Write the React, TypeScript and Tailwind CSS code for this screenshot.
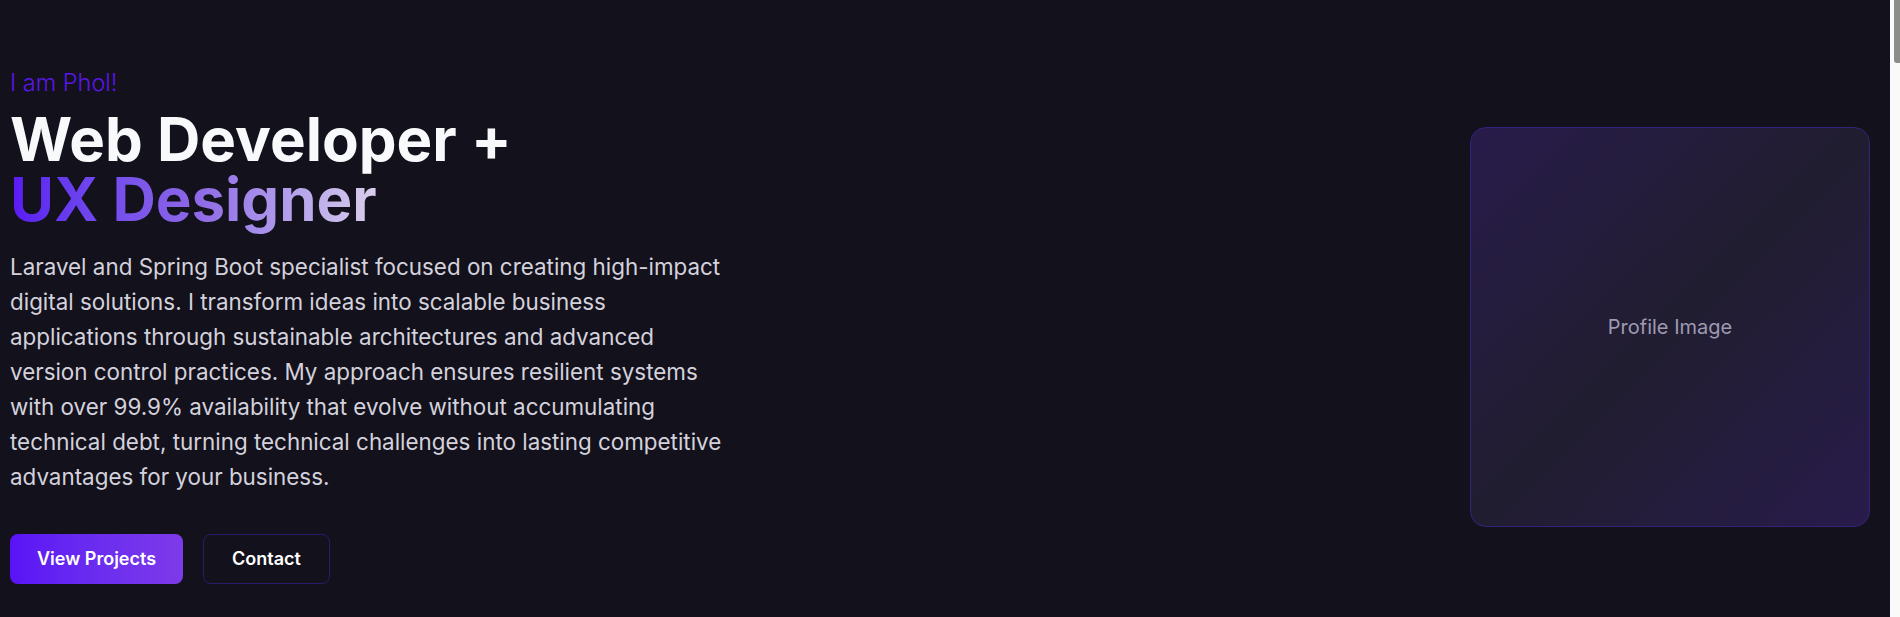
import React from 'react'

const Hero: React.FC = () => (
  <main className="flex flex-1 items-center justify-between pl-[10px] pr-[20px] pt-9">
    <div className="flex flex-col">
      <p className="text-[23.5px] font-light leading-7 text-[#5b17e8]">I am Phol!</p>
      <h1 className="mt-3 text-6xl font-bold leading-none text-[#f8f9fb]">
        Web Developer +
        <br />
        <span className="-mb-3 inline-block bg-gradient-to-r from-[#5a17f2] via-[#8d66e6] to-[#d9cfeb] bg-clip-text pb-3 text-transparent">
          UX Designer
        </span>
      </h1>
      <p className="mt-5 max-w-[720px] text-[22.4px] leading-[35px] text-[#d3d2dc]">
        Laravel and Spring Boot specialist focused on creating high-impact digital solutions. I
        transform ideas into scalable business applications through sustainable architectures and
        advanced version control practices. My approach ensures resilient systems with over 99.9%
        availability that evolve without accumulating technical debt, turning technical challenges
        into lasting competitive advantages for your business.
      </p>
      <div className="mt-10 flex gap-5">
        <button className="h-[50px] rounded-lg bg-gradient-to-r from-[#5a12f6] to-[#7d3ae9] px-[27px] text-lg font-semibold text-white">
          View Projects
        </button>
        <button className="h-[50px] rounded-lg border border-[#2b1a6c] px-7 text-lg font-semibold text-white">
          Contact
        </button>
      </div>
    </div>

    <div className="flex h-[400px] w-[400px] items-center justify-center rounded-2xl border border-[#33237a] bg-gradient-to-br from-[#281b4b] via-[#211d30] to-[#281b4b]">
      <span className="text-xl text-[#9d9ab2]">Profile Image</span>
    </div>
  </main>
)

export default function App() {
  return (
    <div
      className="flex h-[617px] w-full overflow-hidden bg-[#13111c]"
      style={{ fontFamily: 'Inter, "Noto Sans", sans-serif' }}
    >
      <Hero />
      <div className="flex w-[10px] justify-end bg-[#fafafa]">
        <div className="h-[63px] w-[6px] rounded-bl-[3px] bg-[#8c8c8c]" />
      </div>
    </div>
  )
}
